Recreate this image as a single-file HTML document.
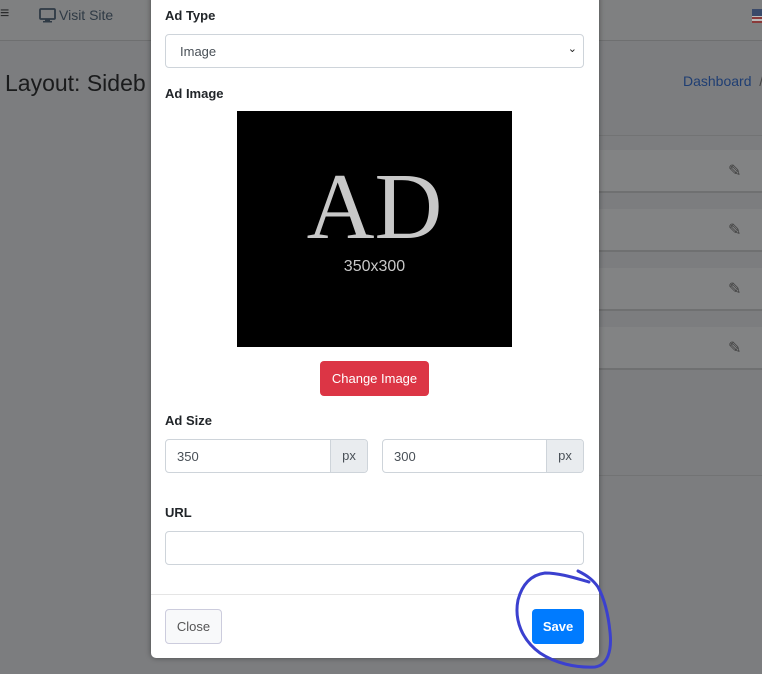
<!DOCTYPE html>
<html><head><style>
*{box-sizing:border-box;margin:0;padding:0}
body{width:762px;height:674px;overflow:hidden;background:#7c7d7f;font-family:"Liberation Sans",sans-serif;position:relative}
.a{position:absolute}
.lbl{position:absolute;left:165px;font-weight:bold;font-size:13px;color:#212529}
.inp{position:absolute;border:1px solid #ced4da;border-radius:4px;background:#fff;font-size:13px;color:#495057}
</style></head><body>
<div class="a" style="left:0;top:0;width:762px;height:41px;border-bottom:1px solid #6e6f70;background:#7f8081"></div>
<div class="a" style="left:0;top:5px;font-size:16px;color:#2a2b2c">≡</div>
<svg class="a" style="left:39px;top:8px" width="17" height="15" viewBox="0 0 17 15"><rect x="1" y="1" width="15" height="10" rx="1" fill="none" stroke="#2f3a45" stroke-width="1.8"/><rect x="6" y="11" width="5" height="2" fill="#2f3a45"/><rect x="4" y="13" width="9" height="1.5" fill="#2f3a45"/></svg>
<div class="a" style="left:59px;top:7px;font-size:14px;color:#2f3a45">Visit Site</div>
<div class="a" style="left:752px;top:9px;width:10px;height:14px;background:repeating-linear-gradient(#8a3a3a 0 2px,#bbb 2px 4px)"></div>
<div class="a" style="left:752px;top:9px;width:10px;height:7px;background:#3a4a6a"></div>
<div class="a" style="left:5px;top:70px;font-size:23px;color:#1a1b1c">Layout: Sideb</div>
<div class="a" style="left:683px;top:73px;font-size:14px;color:#1f3e73;white-space:nowrap">Dashboard <span style="color:#444">&nbsp;/</span></div>
<div class="a" style="left:599px;top:135px;width:163px;height:1px;background:#727374"></div>
<div class="a" style="left:599px;top:150px;width:163px;height:43px;background:#828384;border-bottom:2px solid #6f7071"></div>
<div class="a" style="left:599px;top:209px;width:163px;height:43px;background:#828384;border-bottom:2px solid #6f7071"></div>
<div class="a" style="left:599px;top:268px;width:163px;height:43px;background:#828384;border-bottom:2px solid #6f7071"></div>
<div class="a" style="left:599px;top:327px;width:163px;height:43px;background:#828384;border-bottom:2px solid #6f7071"></div>
<div class="a" style="left:599px;top:475px;width:163px;height:1px;background:#727374"></div>
<div class="a" style="left:728px;top:161px;font-size:16px;color:#3c3c3c">✎</div>
<div class="a" style="left:728px;top:220px;font-size:16px;color:#3c3c3c">✎</div>
<div class="a" style="left:728px;top:279px;font-size:16px;color:#3c3c3c">✎</div>
<div class="a" style="left:728px;top:338px;font-size:16px;color:#3c3c3c">✎</div>
<div class="a" style="left:151px;top:-5px;width:448px;height:663px;background:#fff;border-radius:0 0 5px 5px;box-shadow:0 0 6px rgba(0,0,0,.4)"></div>
<div class="lbl" style="top:8px">Ad Type</div>
<div class="inp" style="left:165px;top:34px;width:419px;height:34px;padding:9px 14px">Image<span style="position:absolute;right:6px;top:7px;font-size:11px;color:#222">&#8964;</span></div>
<div class="lbl" style="top:86px">Ad Image</div>
<div class="a" style="left:237px;top:111px;width:275px;height:236px;background:#000"></div>
<div class="a" style="left:237px;top:160px;width:275px;text-align:center;font-family:'Liberation Serif',serif;font-size:94px;color:#c8c8c8;line-height:1">AD</div>
<div class="a" style="left:237px;top:258px;width:275px;text-align:center;font-size:16px;color:#c8c8c8">350x300</div>
<div class="a" style="left:320px;top:361px;width:109px;height:35px;background:#dc3545;border-radius:4px;color:#fff;font-size:13px;text-align:center;line-height:35px">Change Image</div>
<div class="lbl" style="top:413px">Ad Size</div>
<div class="inp" style="left:165px;top:439px;width:203px;height:34px;padding:9px 11px;overflow:hidden">350<div class="a" style="right:0;top:0;width:37px;height:32px;background:#e9ecef;border-left:1px solid #ced4da;text-align:center;line-height:32px;color:#495057">px</div></div>
<div class="inp" style="left:382px;top:439px;width:202px;height:34px;padding:9px 11px;overflow:hidden">300<div class="a" style="right:0;top:0;width:37px;height:32px;background:#e9ecef;border-left:1px solid #ced4da;text-align:center;line-height:32px;color:#495057">px</div></div>
<div class="lbl" style="top:505px">URL</div>
<div class="inp" style="left:165px;top:531px;width:419px;height:34px"></div>
<div class="a" style="left:151px;top:594px;width:448px;height:1px;background:#e5e5e5"></div>
<div class="a" style="left:165px;top:609px;width:57px;height:35px;background:#f8f9fa;border:1px solid #ccd;border-radius:4px;color:#555;font-size:13px;text-align:center;line-height:33px">Close</div>
<div class="a" style="left:532px;top:609px;width:52px;height:35px;background:#007bff;border-radius:4px;color:#fff;font-size:13px;font-weight:bold;text-align:center;line-height:35px">Save</div>
<svg class="a" style="left:0;top:0" width="762" height="674"><path d="M589 582 C575 578 560 573 545 573 C530 575 522 585 518 600 C514 620 522 640 540 653 C555 663 575 668 595 667 C608 665 612 650 610 632 C608 612 604 598 598 587 C593 580 588 576 578 571" fill="none" stroke="#3b40cf" stroke-width="3" stroke-linecap="round"/></svg>
</body></html>
